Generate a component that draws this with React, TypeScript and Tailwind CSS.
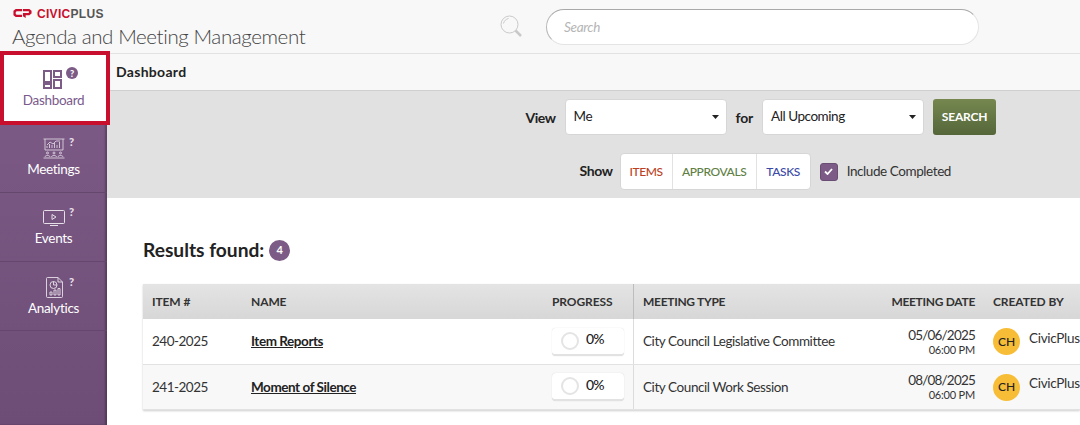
import React from "react";

const rows = [
  { id: "240-2025", name: "Item Reports", type: "City Council Legislative Committee", date: "05/06/2025", bg: "bg-white", h: "h-[46px]" },
  { id: "241-2025", name: "Moment of Silence", type: "City Council Work Session", date: "08/08/2025", bg: "bg-[#f8f8f8]", h: "h-[45px]" },
];

const Logo = () => (
  <svg width="19" height="11" viewBox="0 0 21 11" fill="#c8102e" className="ml-[1px]">
    <path d="M3 0.5H10V3H4L3 4V6L4 7H10V9.5H3L0.5 7.5V2.5Z" />
    <path d="M11 0.5H18L20.5 2.5V5.5L18 7.5H14V10.5L11 8.5V5H17.5V3H11Z" />
  </svg>
);

const Select = ({ value, width }: { value: string; width: string }) => (
  <div className={`flex h-[36px] items-center justify-between rounded-[4px] border border-[#d6d6d6] bg-white pb-[2px] pl-[8px] pr-[6px] text-[13.5px] tracking-[-0.45px] text-[#222] ${width}`}>
    <span>{value}</span>
    <svg width="7" height="4" viewBox="0 0 7 4" className="mr-[1px] mt-[2px]">
      <path d="M0 0H7L3.5 4Z" fill="#222" />
    </svg>
  </div>
);

type NavProps = {
  label: string;
  icon: React.ReactNode;
  heightClass: string;
  iconClass: string;
  labelClass: string;
  helpClass: string;
};

const NavItem = ({ label, icon, heightClass, iconClass, labelClass, helpClass }: NavProps) => (
  <div className={`relative flex flex-col items-center border-b border-[#65476e] text-[13.5px] tracking-[-0.3px] text-white ${heightClass}`}>
    <div className={`flex h-[22px] items-center justify-center ${iconClass}`}>{icon}</div>
    <span className={`leading-[18px] ${labelClass}`}>{label}</span>
    <span className={`absolute left-[69px] text-[11px] font-black leading-none text-[#e6dfe8] ${helpClass}`}>?</span>
  </div>
);

const MeetingsIcon = () => (
  <svg width="22" height="21" viewBox="0 0 22 21" fill="none" stroke="#e6dfe8" strokeWidth="0.8">
    <path d="M0.5 1H21.5M2 1V12H20V1" />
    <path d="M4 10V8M6.5 10V6M9 10V7M11.5 10V5M14 10V7M16.5 10V4M4 7L7 4L10 6L13 3L17 3" />
    <circle cx="4.5" cy="15" r="1" />
    <circle cx="11" cy="15" r="1" />
    <circle cx="17.5" cy="15" r="1" />
    <path d="M2 19C2 17 7 17 7 19M8.5 19C8.5 17 13.5 17 13.5 19M15 19C15 17 20 17 20 19M0.5 20H21.5" />
  </svg>
);

const EventsIcon = () => (
  <svg width="22" height="16" viewBox="0 0 22 16" fill="none" stroke="#e6dfe8" strokeWidth="1">
    <rect x="0.5" y="0.5" width="21" height="13" rx="1" />
    <path d="M9 4.5L13 7L9 9.5Z" />
    <path d="M7 15.5H15" />
  </svg>
);

const AnalyticsIcon = () => (
  <svg width="17" height="21" viewBox="0 0 17 21" fill="none" stroke="#e6dfe8" strokeWidth="0.9" className="ml-[2px]">
    <path d="M1.5 0.5H12L16.5 5V19.5A1 1 0 0 1 15.5 20.5H1.5A1 1 0 0 1 0.5 19.5V1.5A1 1 0 0 1 1.5 0.5Z" />
    <path d="M12 0.5V5H16.5" />
    <circle cx="7.5" cy="8" r="3.5" />
    <path d="M7.5 4.5V8H11" />
    <path d="M4 18V15H6V18ZM8 18V13H10V18ZM12 18V11.5H14V18Z" />
  </svg>
);

const App = () => {
  return (
    <div className="flex h-[425px] w-[1080px] flex-col overflow-hidden bg-white font-['Lato',sans-serif] text-[#222]">
      <header className="flex h-[54px] shrink-0 border-b border-[#e2e2e2] bg-[#f8f8f8]">
        <div className="w-[500px] shrink-0 pl-[12px]">
          <div className="mt-[7px] flex h-[13px] items-center gap-[5px]">
            <Logo />
            <span className="font-['Liberation_Sans',sans-serif] text-[12px] font-bold leading-none tracking-[0.3px] text-[#c8102e]">
              CIVIC<span className="text-[#555]">PLUS</span>
            </span>
          </div>
          <h1 className="mt-[1px] text-[20.5px] font-light leading-[30px] tracking-[-0.4px] text-[#444]">Agenda and Meeting Management</h1>
        </div>
        <svg width="23" height="23" viewBox="0 0 23 23" fill="none" stroke="#c9c9c9" className="mt-[15px]">
          <circle cx="9.5" cy="9.5" r="8.5" />
          <path d="M3.5 8.5C4 6 6 4 8.5 3.5" />
          <path d="M15.5 15.5L21 21" strokeWidth="2.5" />
        </svg>
        <div className="ml-[23px] mt-[9px] flex h-[36px] w-[433px] items-center rounded-full border border-[#e4e4e4] border-l-[#b8b8b8] border-t-[#a8a8a8] bg-white pl-[17px] text-[13.5px] italic tracking-[-0.3px] text-[#b5b5b5]">
          Search
        </div>
      </header>

      <div className="flex min-h-0 flex-1">
        <aside className="w-[107px] shrink-0 bg-gradient-to-b from-[#7e5c88] to-[#6d4d76] shadow-[inset_-2px_0_2px_rgba(0,0,0,0.25)]">
          <div className="relative z-10 -mt-[3px] flex h-[74px] w-[110px] flex-col items-center border-[4px] border-[#c8102e] bg-white text-[#7a5a8c]">
            <svg width="19" height="19" viewBox="0 0 19 19" fill="none" stroke="#7c5c86" strokeWidth="2" className="mr-[5px] mt-[15px]">
              <rect x="1" y="1" width="7" height="11" />
              <rect x="11" y="1" width="7" height="6" />
              <rect x="1" y="14" width="7" height="4" />
              <rect x="11" y="10" width="7" height="8" />
            </svg>
            <span className="mr-[3px] mt-[2px] text-[13.5px] leading-[18px] tracking-[-0.3px]">Dashboard</span>
            <span className="absolute left-[62px] top-[12px] flex h-[12px] w-[12px] items-center justify-center rounded-full bg-[#7c5c86] text-[9px] font-black leading-none text-white">?</span>
          </div>
          <NavItem label="Meetings" icon={<MeetingsIcon />} heightClass="h-[68px]" iconClass="mt-[12px]" labelClass="mt-[1px]" helpClass="top-[11px]" />
          <NavItem label="Events" icon={<EventsIcon />} heightClass="h-[69px]" iconClass="mt-[14px]" labelClass="mt-[0px]" helpClass="top-[13px]" />
          <NavItem label="Analytics" icon={<AnalyticsIcon />} heightClass="h-[69px]" iconClass="mt-[14px]" labelClass="mt-[1px]" helpClass="top-[14px]" />
        </aside>

        <main className="min-w-0 flex-1">
          <div className="flex h-[37px] items-center border-b border-[#cfcfcf] bg-[#f8f8f8] pb-[2px] pl-[9px] text-[14px] font-bold tracking-[0.3px] text-[#222]">
            Dashboard
          </div>

          <div className="h-[107px] bg-[#e1e1e1] pt-[8px]">
            <div className="flex items-center justify-end pr-[84px]">
              <span className="mr-[9px] text-[14px] font-bold tracking-[-0.5px]">View</span>
              <Select value="Me" width="w-[162px]" />
              <span className="mx-[9px] text-[14px] font-bold tracking-[-0.2px]">for</span>
              <Select value="All Upcoming" width="w-[162px]" />
              <button className="ml-[9px] h-[36px] w-[63px] rounded-[3px] bg-gradient-to-b from-[#76884f] to-[#55663a] text-[12px] font-bold tracking-[-0.2px] text-white">
                SEARCH
              </button>
            </div>
            <div className="mt-[18px] flex items-center justify-end pr-[129px]">
              <span className="mb-[2px] mr-[7px] text-[14px] font-bold tracking-[-0.4px]">Show</span>
              <div className="flex h-[37px] items-center rounded-[4px] border border-[#d6d6d6] bg-white text-[12px] font-medium tracking-[-0.4px]">
                <span className="flex h-full w-[52px] items-center justify-center border-r border-[#e2e2e2] text-[#bb3f24]">ITEMS</span>
                <span className="flex h-full w-[84px] items-center justify-center border-r border-[#e2e2e2] text-[#5f7f45]">APPROVALS</span>
                <span className="flex h-full w-[53px] items-center justify-center text-[#3c4aa8]">TASKS</span>
              </div>
              <span className="ml-[9px] flex h-[18px] w-[18px] items-center justify-center rounded-[3px] border border-[#6a4d74] bg-[#7c5c86]">
                <svg width="9" height="7" viewBox="0 0 9 7" fill="none" stroke="white" strokeWidth="1.8">
                  <path d="M1 3.5L3.5 6L8 1" />
                </svg>
              </span>
              <span className="ml-[9px] text-[13.5px] tracking-[-0.42px] text-[#333]">Include Completed</span>
            </div>
          </div>

          <div className="pl-[36px]">
            <div className="mt-[40px] flex h-[24px] items-center gap-[5px]">
              <h2 className="text-[19.2px] font-bold text-[#222]">Results found:</h2>
              <span className="flex h-[21px] w-[21px] items-center justify-center rounded-full bg-[#7c5c86] text-[11px] font-bold text-white">4</span>
            </div>

            <div className="mt-[22px] w-[937px] shadow-[0_1px_2px_rgba(0,0,0,0.2)]">
              <div className="grid h-[35px] grid-cols-[99px_301px_91px_229px_121px_96px] items-center bg-gradient-to-b from-[#e4e4e4] to-[#d7d7d7] text-[12px] font-bold tracking-[-0.1px] text-[#333]">
                <span className="pl-[9px]">ITEM #</span>
                <span className="pl-[9px]">NAME</span>
                <span className="flex h-full items-center border-r border-[#bdbdbd] pl-[9px]">PROGRESS</span>
                <span className="pl-[9px] tracking-[-0.3px]">MEETING TYPE</span>
                <span className="pr-[9px] text-right tracking-[-0.3px]">MEETING DATE</span>
                <span className="pl-[9px]">CREATED BY</span>
              </div>
              {rows.map((r) => (
                <div
                  key={r.id}
                  className={`grid grid-cols-[99px_301px_91px_229px_121px_96px] items-center border-b border-[#e2e2e2] text-[13.5px] tracking-[-0.42px] text-[#333] ${r.h} ${r.bg}`}
                >
                  <span className="pl-[9px] tracking-[-0.5px]">{r.id}</span>
                  <a className="pl-[9px] font-bold tracking-[-0.45px] text-[#222] underline">{r.name}</a>
                  <div className="flex h-full items-center border-r border-[#dcdcdc] pl-[9px]">
                    <div className="flex h-[28px] w-[72px] items-center rounded-[4px] border-b-2 border-[#e2e2e2] bg-white pl-[9px] shadow-[0_0_1px_rgba(0,0,0,0.2)]">
                      <span className="h-[18px] w-[18px] rounded-full border-2 border-[#e4e4e4]" />
                      <span className="mb-[4px] ml-[7px] text-[14px] font-medium tracking-[-0.8px] text-[#222]">0%</span>
                    </div>
                  </div>
                  <span className="pl-[9px]">{r.type}</span>
                  <div className="flex flex-col items-end pr-[9px]">
                    <span className="text-[13.5px] leading-[15px] tracking-[-0.8px]">{r.date}</span>
                    <span className="text-[11px] leading-[13px] tracking-[-0.2px]">06:00 PM</span>
                  </div>
                  <div className="flex items-center pl-[9px]">
                    <span className="flex h-[27px] w-[27px] shrink-0 items-center justify-center rounded-full bg-[#f8bd37] text-[12px] font-medium tracking-normal text-[#222]">CH</span>
                    <span className="mb-[7px] ml-[9px] whitespace-nowrap tracking-[-0.3px]">CivicPlus</span>
                  </div>
                </div>
              ))}
            </div>
          </div>
        </main>
      </div>
    </div>
  );
};

export default App;
